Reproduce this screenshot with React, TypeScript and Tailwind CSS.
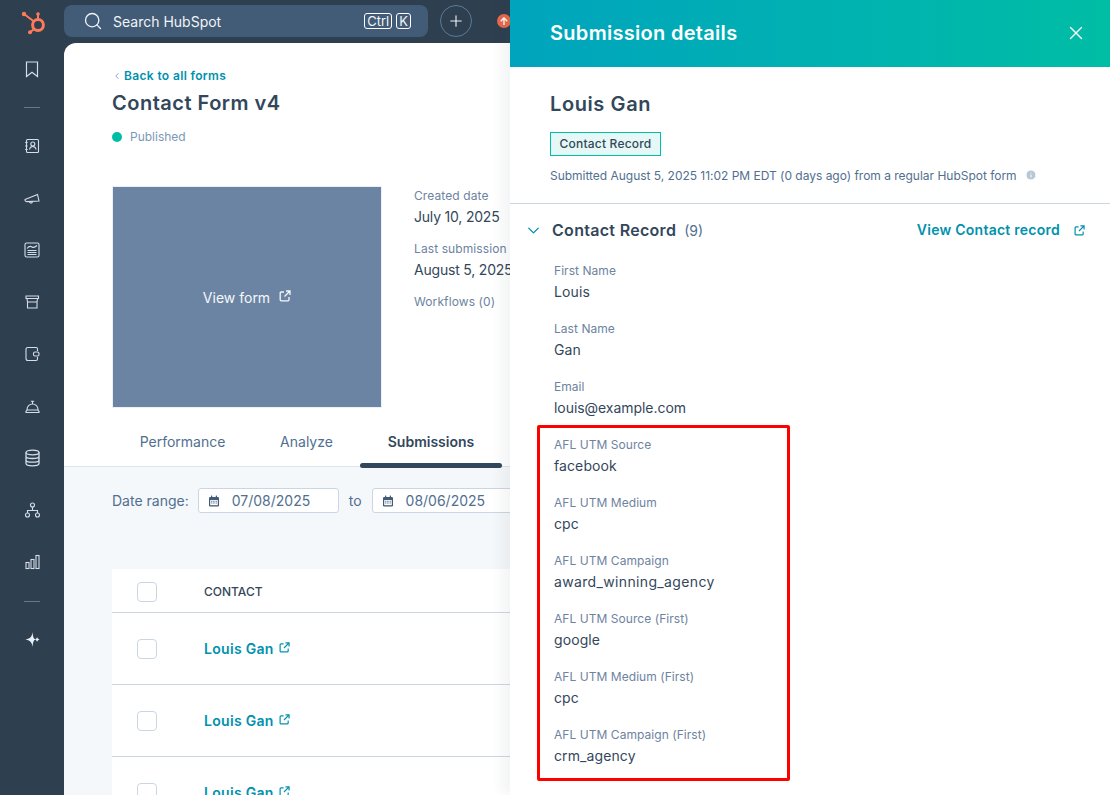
import React from "react";
import { Search, Plus, X, ChevronDown, ChevronLeft, Info } from "lucide-react";

const Ext = ({ className = "" }: { className?: string }) => (
  <svg viewBox="0 0 12 12" fill="none" stroke="currentColor" strokeWidth="1.3" className={className}>
    <path d="M5 2H2.2A1 1 0 0 0 1.200 3v6.800a1 1 0 0 0 1 1H9a1 1 0 0 0 1-1V7" />
    <path d="M7 1h4v4M11 1 5.500 6.500" />
  </svg>
);

const Cal = () => (
  <svg viewBox="0 0 12 12" className="w-3 h-3 shrink-0 text-[#425b76]">
    <rect x="1" y="2" width="10" height="9.500" rx="1.200" fill="currentColor" />
    <rect x="3" y=".6" width="1.200" height="2.400" fill="currentColor" />
    <rect x="7.800" y=".6" width="1.200" height="2.400" fill="currentColor" />
    <rect x="2.200" y="5" width="7.600" height="5.200" fill="#fff" />
    <path d="M3.200 6.300h5.600M3.200 8h5.600" stroke="currentColor" strokeWidth=".9" strokeDasharray="1 .6" />
  </svg>
);

const Logo = () => (
  <svg width="26" height="28" viewBox="0 0 26 28" fill="none" className="text-[#ff7a59]">
    <g transform="translate(-19 -5)">
      <circle cx="38" cy="23" r="5.400" stroke="currentColor" strokeWidth="3" />
      <path d="M38 12v6M24 12l10 7.500M30.500 30l4-3.500" stroke="currentColor" strokeWidth="2" />
      <circle cx="38" cy="12" r="1.800" fill="currentColor" />
      <circle cx="24" cy="12" r="2.200" fill="currentColor" />
      <circle cx="30" cy="30.300" r="2" fill="currentColor" />
    </g>
  </svg>
);

const navStroke = { fill: "none", stroke: "#d5dee8", strokeWidth: 1.1 };

const NavIcons: Record<string, React.ReactNode> = {
  bookmark: <path d="M4.500 3h11v14.500L10 13.200l-5.500 4.300z" {...navStroke} strokeWidth={1.200} />,
  contacts: (
    <g {...navStroke}>
      <rect x="4.500" y="3.500" width="12" height="13" rx="1" />
      <circle cx="10.800" cy="8" r="2" />
      <path d="M7.500 13.500c.4-2 1.700-3 3.300-3s2.900 1 3.300 3M3.200 6.500h2.400M3.200 10h2.400M3.200 13.500h2.400" />
    </g>
  ),
  mega: (
    <g {...navStroke}>
      <path d="M3 11.500 15.500 6.500l1.500 6.500-12 .6c-1.400-.1-2.300-1.300-2-2.100z" />
      <path d="M7.500 13.800c0 1.500 2.300 1.800 3 .3" />
    </g>
  ),
  news: (
    <g {...navStroke}>
      <rect x="3" y="3" width="14" height="14" rx="1.500" />
      <path d="M5 8.500c2-2.500 3.500-2.500 5-1.500s3 .3 5-1.500M5.500 10.500h9M5.500 12.500h9M5.500 14.500h9" />
    </g>
  ),
  store: (
    <g {...navStroke}>
      <path d="M4 4h12.500v2.500H4zM5 6.500l.5 3.500h9.500l.5-3.500M5.500 10h9.500v6H5.500z" />
    </g>
  ),
  wallet: (
    <g {...navStroke}>
      <path d="M15.500 7V4.800c0-.8-.5-1.300-1.300-1.300H5.800C4.500 3.500 4 4.300 4 5.500v9c0 1.200.7 2 2 2h8c1 0 1.500-.6 1.500-1.500v-2" />
      <rect x="11.500" y="8" width="5.500" height="4" rx="1.500" />
    </g>
  ),
  bell: (
    <g {...navStroke}>
      <path d="M4 16.500h13v-1.200c-.6-.3-1-.9-1-1.800 0-3-2.400-5.500-5.500-5.500S5 10.500 5 13.500c0 .9-.4 1.500-1 1.800zM5 14h11M10.500 8V5.500M8.800 5.200h3.400" />
    </g>
  ),
  db: (
    <g {...navStroke} strokeWidth={1.300}>
      <ellipse cx="10.500" cy="4.500" rx="6.500" ry="2.300" />
      <path d="M4 4.500v11c0 1.300 2.900 2.300 6.500 2.300s6.500-1 6.500-2.300v-11M4 8.200c0 1.300 2.900 2.300 6.500 2.300S17 9.500 17 8.200M4 11.900c0 1.300 2.900 2.300 6.500 2.300S17 13.200 17 11.900" />
    </g>
  ),
  org: (
    <g {...navStroke}>
      <circle cx="10.500" cy="5" r="2" />
      <circle cx="5.500" cy="15" r="2" />
      <circle cx="15.500" cy="15" r="2" />
      <path d="M10.500 7v3.500M5.500 13v-2.500h10V13" />
    </g>
  ),
  bars: (
    <g {...navStroke}>
      <rect x="4" y="10.500" width="3" height="6" />
      <rect x="9" y="7.500" width="3" height="9" />
      <rect x="14" y="3.500" width="3" height="13" />
    </g>
  ),
  spark: (
    <path d="M10.500 3c.4 4 1 6.300 1.800 6.800.5.300 1 .4 1.700.4.300-.9.600-1.500 1.100-2 .3.900.9 1.600 2.400 2.300-1.500.7-2.100 1.400-2.400 2.300-.5-.5-.8-1.100-1.100-2-.7 0-1.200.1-1.700.4-.8.500-1.400 2.800-1.800 6.800-.4-4-1.600-6.500-7-7.500 5.400-1 6.600-3.500 7-7.500z" fill="#eaf0f6" />
  ),
};

const Nav = ({ name }: { name: string }) => (
  <div className="h-[52px] w-full flex items-center justify-center">
    <svg width="21" height="21" viewBox="0 0 21 21">{NavIcons[name]}</svg>
  </div>
);

const Rule = () => <div className="w-4 h-px bg-[#5c7a99] my-[12px]" />;

const Sidebar = () => (
  <aside className="w-16 shrink-0 bg-[#2e3f50] flex flex-col items-center pt-[7px]">
    <Logo />
    <div className="mt-[8px] w-full"><Nav name="bookmark" /></div>
    <Rule />
    <div className="w-full">
      {["contacts", "mega", "news", "store", "wallet", "bell", "db", "org", "bars"].map((n) => (
        <Nav key={n} name={n} />
      ))}
    </div>
    <div className="mt-[1px]"><Rule /></div>
    <div className="w-full -mt-[1px]"><Nav name="spark" /></div>
  </aside>
);

const TopBar = () => (
  <header className="h-[43px] shrink-0 flex items-start pt-[5px] gap-[12px]">
    <div className="w-[364px] h-8 rounded-lg bg-[#425b76] flex items-center pl-[19px] pr-[17px] text-[#f0f4f8]">
      <Search size={20} strokeWidth={1.600} />
      <span className="ml-[10px] text-[14px] flex-1">Search HubSpot</span>
      <span className="border border-white rounded-[3px] text-[13px] leading-[14px] px-[2px]">Ctrl</span>
      <span className="border border-white rounded-[3px] text-[13px] leading-[14px] px-[2px] ml-[4px]">K</span>
    </div>
    <div className="w-8 h-8 rounded-full border border-[#5c7a99] flex items-center justify-center text-[#eaf0f6]">
      <Plus size={18} strokeWidth={1.500} />
    </div>
    <div className="ml-[13px] mt-[9px] w-[14px] h-[14px] rounded-full bg-[#e8694a] flex items-center justify-center text-white text-[10px] font-bold leading-none">↑</div>
  </header>
);

const Meta = ({ label, value }: { label: string; value?: string }) => (
  <div className="mb-[11px]">
    <div className="text-[12px] leading-[18px] text-[#6d83a0] tracking-[0.1px] whitespace-nowrap">{label}</div>
    {value && <div className="text-[14px] leading-[24px] text-[#33475b] tracking-[-0.2px] whitespace-nowrap">{value}</div>}
  </div>
);

const Tab = ({ label, active, w }: { label: string; active?: boolean; w: string }) => (
  <div className={`relative text-center text-[14px] pt-[12px] h-[47px] ${w} ${active ? "font-semibold text-[#33475b]" : "text-[#516f90]"}`}>
    {label}
    {active && <div className="absolute left-0 right-0 bottom-[-2px] h-[5px] rounded-[3px] bg-[#33475b]" />}
  </div>
);

const DateBox = ({ value }: { value: string }) => (
  <div className="w-[141px] h-[25px] shrink-0 bg-white border border-[#cbd6e2] rounded-[3px] flex items-center pl-[9px] gap-[12px] text-[14px] text-[#516f90]">
    <Cal />
    {value}
  </div>
);

const Check = () => <div className="w-5 h-5 rounded-[4px] border border-[#cbd6e2] bg-white" />;

const Row = () => (
  <div className="h-[72px] shrink-0 border-t border-[#cbd6e2] flex items-center pl-[25px]">
    <Check />
    <a className="ml-[47px] text-[14px] font-semibold text-[#0091ae] tracking-[0.3px] -mt-[1px]">Louis Gan</a>
    <Ext className="ml-[5px] w-[11px] h-[11px] text-[#0091ae] -mt-[2px]" />
  </div>
);

const Main = () => (
  <main className="flex-1 min-h-0 rounded-tl-xl bg-white flex flex-col overflow-hidden">
    <div className="pl-[48px] pt-[24px] shrink-0">
      <div className="flex items-center h-[18px] text-[12px] font-semibold text-[#0091ae] tracking-[0.35px]">
        <ChevronLeft size={10} className="text-[#7c98b6] mr-[2px]" />
        <span>Back to all forms</span>
      </div>
      <h1 className="mt-[4px] text-[20px] leading-[28px] font-semibold text-[#33475b] tracking-[0.5px]">Contact Form v4</h1>
      <div className="mt-[11px] flex items-center h-[18px]">
        <span className="w-[10px] h-[10px] rounded-full bg-[#00bda5]" />
        <span className="ml-[8px] text-[12px] text-[#7c98b6]">Published</span>
      </div>
      <div className="mt-[40px] flex">
        <div className="w-[270px] h-[222px] shrink-0 border border-[#eaf0f6] bg-[#6b84a3] flex items-center justify-center gap-[9px] text-[#f5f8fa] text-[14px]">
          <span>View form</span>
          <Ext className="w-[12px] h-[12px] -mt-[3px]" />
        </div>
        <div className="ml-[32px] mt-[1px]">
          <Meta label="Created date" value="July 10, 2025" />
          <Meta label="Last submission received" value="August 5, 2025" />
          <Meta label="Workflows (0)" />
        </div>
      </div>
    </div>
    <div className="shrink-0 mt-[11px] h-[48px] border-b border-[#dfe3eb] pl-[48px] flex">
      <Tab label="Performance" w="w-[141px]" />
      <Tab label="Analyze" w="w-[107px]" />
      <Tab label="Submissions" active w="w-[142px]" />
    </div>
    <div className="flex-1 min-h-0 bg-[#f5f8fa] pl-[48px] overflow-hidden">
      <div className="mt-[21px] flex items-center gap-[8px] text-[14px] text-[#516f90] whitespace-nowrap">
        <span className="mr-[1px]">Date range:</span>
        <DateBox value="07/08/2025" />
        <span className="mx-[2px]">to</span>
        <DateBox value="08/06/2025" />
      </div>
      <div className="mt-[56px] bg-white flex flex-col">
        <div className="h-[43px] flex items-center pl-[25px] pt-[3px]">
          <Check />
          <span className="ml-[47px] text-[12px] font-medium text-[#33475b]">CONTACT</span>
        </div>
        <Row />
        <Row />
        <Row />
      </div>
    </div>
  </main>
);

const Field = ({ label, value, track = "tracking-[0.1px]" }: { label: string; value: string; track?: string }) => (
  <div className="h-[58px] pt-[1px]">
    <div className="text-[12px] leading-[18px] text-[#6d83a0] tracking-[0.05px]">{label}</div>
    <div className={`text-[14px] leading-[24px] text-[#33475b] ${track}`}>{value}</div>
  </div>
);

const Panel = () => (
  <section className="absolute left-[510px] top-0 bottom-0 w-[600px] bg-white flex flex-col shadow-[-8px_0_12px_rgba(45,62,80,0.06)] overflow-hidden">
    <div className="h-[67px] shrink-0 bg-gradient-to-r from-[#00a4bd] to-[#00bda5] flex items-center justify-between pl-[40px] pr-[23px] text-white">
      <h2 className="text-[20px] leading-[28px] -mt-[1px] font-semibold tracking-[0.3px]">Submission details</h2>
      <X size={22} strokeWidth={1.500} className="-mt-[1px]" />
    </div>
    <div className="shrink-0 h-[137px] border-b border-[#cbd6e2] pl-[40px] pt-[23px]">
      <div className="text-[20px] leading-[28px] font-semibold text-[#33475b] tracking-[0.6px]">Louis Gan</div>
      <div className="mt-[14px] w-[111px] h-[24px] border border-[#00bda5] bg-[#e5f8f6] flex items-center justify-center text-[12px] font-medium text-[#33475b] tracking-[0.2px]">Contact Record</div>
      <div className="mt-[11px] flex items-center text-[12px] leading-[18px] text-[#516f90] tracking-[-0.02px]">
        <span>Submitted August 5, 2025 11:02 PM EDT (0 days ago) from a regular HubSpot form</span>
        <Info size={12} className="ml-[8px] -mt-[3px] text-white fill-[#b6c7d6]" />
      </div>
    </div>
    <div className="shrink-0 h-[52px] flex items-center pl-[14px] pr-[25px]">
      <ChevronDown size={19} strokeWidth={1.700} className="text-[#0091ae]" />
      <span className="ml-[9px] text-[16px] font-semibold text-[#33475b] tracking-[0.3px]">Contact Record</span>
      <span className="ml-[8px] text-[14px] text-[#516f90]">(9)</span>
      <span className="ml-auto mr-[1px] -mt-[1px] text-[14px] font-semibold text-[#0091ae] tracking-[0.25px]">View Contact record</span>
      <Ext className="ml-[13px] w-[11px] h-[11px] text-[#0091ae]" />
    </div>
    <div className="pl-[44px] pt-[5px]">
      <Field label="First Name" value="Louis" />
      <Field label="Last Name" value="Gan" />
      <Field label="Email" value="louis@example.com" track="tracking-[-0.05px]" />
      <Field label="AFL UTM Source" value="facebook" />
      <Field label="AFL UTM Medium" value="cpc" />
      <Field label="AFL UTM Campaign" value="award_winning_agency" track="tracking-[0.35px]" />
      <Field label="AFL UTM Source (First)" value="google" />
      <Field label="AFL UTM Medium (First)" value="cpc" />
      <Field label="AFL UTM Campaign (First)" value="crm_agency" />
    </div>
  </section>
);

export default function App() {
  return (
    <div className="relative w-[1110px] h-[795px] overflow-hidden flex bg-[#2e3f50] font-['Inter',sans-serif]">
      <Sidebar />
      <div className="flex-1 min-w-0 flex flex-col">
        <TopBar />
        <Main />
      </div>
      <Panel />
      <div className="absolute left-[537px] top-[425px] w-[253px] h-[356px] border-[3px] border-[#ff0000] rounded-[2px]" />
    </div>
  );
}
